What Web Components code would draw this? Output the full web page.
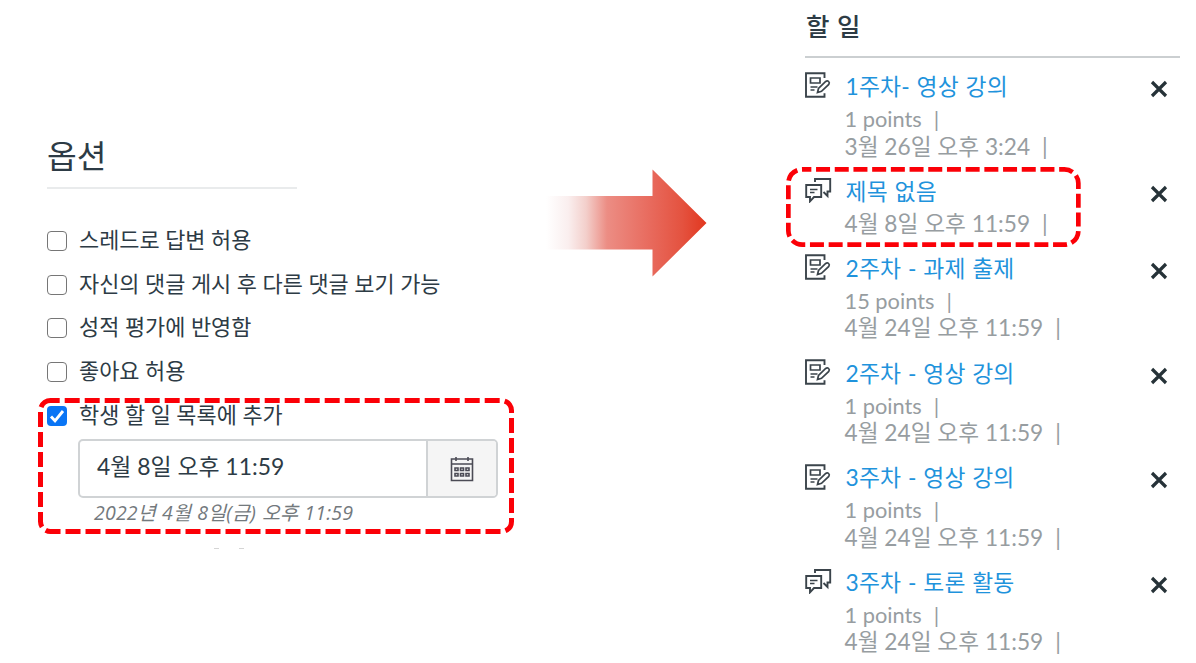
<!DOCTYPE html>
<html lang="ko">
<head>
<meta charset="utf-8">
<title>할 일</title>
<style>
body{
    margin: 0;
    background: #fff;
    font-family: Lato, "Noto Sans CJK KR", sans-serif;
    color: #2d3b45;
  }
</style>
</head>
<body>
<todo-page></todo-page>

<script>
//small helper, every element clones its own template
function makeTemplate(html){
    const template = document.createElement("template");
    template.innerHTML = html;
    return template;
}

const checkTemplate = makeTemplate(`
<style>
:host{
    display: flex;
    align-items: center;
    height: 43.75px;
    font-size: 21.9px;
    white-space: nowrap;
  }
i{
    box-sizing: border-box;
    width: 20px;
    height: 20px;
    margin: 2px 12px 0 0;
    border: 1.5px solid #767676;
    border-radius: 4px;
    background: #fff;
  }
svg{ display: none; width: 20px; height: 20px; }
:host([checked]) i{ border: 0; background: #0a75f5; }
:host([checked]) svg{ display: block; }
span{ padding-bottom: 3px; }
</style>
<i><svg viewBox="0 0 20 20"><path d="M4 10.6l4 4.2L16 5" fill="none" stroke="#fff" stroke-width="2.9"/></svg></i>
<span><slot></slot></span>
`);

class OptionCheck extends HTMLElement{
    constructor(){
        super();
        this.attachShadow({mode:"open"});
        this.shadowRoot.appendChild(checkTemplate.content.cloneNode(true));
    }
}
customElements.define("option-check", OptionCheck);

const dateTemplate = makeTemplate(`
<style>
:host{ display: block; width: 420px; }
.field{
    box-sizing: border-box;
    display: flex;
    height: 59px;
    border: 2px solid #d0d3d5;
    border-radius: 5px;
    overflow: hidden;
  }
.value{
    flex: 1;
    padding-left: 17px;
    font-size: 22.9px;
    line-height: 51px;
    white-space: nowrap;
  }
.button{
    display: flex;
    align-items: center;
    justify-content: center;
    width: 68.5px;
    border-left: 2px solid #d0d3d5;
    background: #f5f5f5;
  }
.hint{
    margin-left: 16px;
    font-family: "Open Sans", "Noto Sans CJK KR", sans-serif;
    font-size: 19.6px;
    font-style: italic;
    letter-spacing: .15px;
    word-spacing: .8px;
    line-height: 29px;
    color: #73797d;
    white-space: nowrap;
  }
</style>
<div class="field">
  <div class="value"><slot></slot></div>
  <div class="button">
    <svg width="24" height="26" viewBox="0 0 24 26" fill="none" stroke="#4b4b55" stroke-width="1.6">
      <path d="M1.5 3h21v21.500h-21zM1.500 8h21M6 1v4M18 1v4"/>
      <path d="M5 12h3v2.500h-3zM10.500 12h3v2.500h-3zM16 12h3v2.500h-3zM5 17.500h3v2.500h-3zM10.500 17.500h3v2.500h-3zM16 17.500h3v2.500h-3z" stroke-width="1.600"/>
    </svg>
  </div>
</div>
<div class="hint"><slot name="hint"></slot></div>
`);

class DateField extends HTMLElement{
    constructor(){
        super();
        this.attachShadow({mode:"open"});
        this.shadowRoot.appendChild(dateTemplate.content.cloneNode(true));
    }
}
customElements.define("date-field", DateField);

const icons = {
    assignment: `<path d="M19.500 7V2.300H1v23.500h18.500v-3.500"/><path d="M5.500 7h9.500v5h-9.500z" stroke-width="1.700"/><path d="M5.500 16h7M5.500 19h4" stroke-width="1.500"/><path d="M12.500 21.500l1-4L20.700 10.500q1.600-1.200 2.900 0t.2 2.900L16.500 20.300z" fill="#fff" stroke-width="1.700"/>`,
    discussion: `<path d="M10 6V3h15.200v12.500h-2.700v4.500l-4-4"/><path d="M1.200 9h15v12h-7.200l-4 4.300v-4.300h-3.800z"/><path d="M5 13.500h7.500M5 16.500h4.500" stroke-width="1.500"/>`
};

const itemTemplate = makeTemplate(`
<style>
:host{
    display: flex;
    align-items: flex-start;
    padding-bottom: 13.7px;
    white-space: nowrap;
  }
.icon{ width: 27px; height: 27px; margin: 2.3px 12.5px 0 0; }
.body{ flex: 1; }
.title{
    padding: 0 0 2px 1px;
    font-size: 22.800px;
    letter-spacing: .2px;
    word-spacing: .6px;
    line-height: 34px;
    color: #1f93dc;
  }
.line{
    font-size: 22.7px;
    line-height: 28px;
    height: 27.5px;
    color: #979da1;
  }
.line.points{ font-size: 21.8px; }
.line::after{ content: "|"; margin-left: 12px; }
.close{ width: 18px; height: 18px; margin: 11px 12.5px 0 0; }
</style>
<svg class="icon" viewBox="0 0 27 27" fill="none" stroke="#3b444b" stroke-width="1.900"></svg>
<div class="body"><div class="title"></div></div>
<svg class="close" viewBox="0 0 18 18"><path d="M2 2l14 14M16 2L2 16" stroke="#263238" stroke-width="3.200"/></svg>
`);

class TodoItem extends HTMLElement{
    constructor(){
        super();
        this.attachShadow({mode:"open"});
        this.shadowRoot.appendChild(itemTemplate.content.cloneNode(true));
    }

    connectedCallback(){
        this.render();
    }

    render(){
        const root = this.shadowRoot;
        root.querySelector(".icon").innerHTML = icons[this.getAttribute("data-kind")];
        root.querySelector(".title").textContent = this.getAttribute("data-title");
        root.querySelectorAll(".line").forEach(line => line.remove());
        //points are optional, the date is always there
        for(const name of ["points", "date"]){
            const text = this.getAttribute(`data-${name}`);
            if(!text) continue;
            const line = document.createElement("div");
            line.className = `line ${name}`;
            line.textContent = text;
            root.querySelector(".body").appendChild(line);
        }
    }
}
customElements.define("todo-item", TodoItem);

//dashed red frame laid over what it marks
class MarkFrame extends HTMLElement{
    constructor(){
        super();
        this.attachShadow({mode:"open"});
    }

    connectedCallback(){
        const w = Number(this.getAttribute("data-width"));
        const h = Number(this.getAttribute("data-height"));
        const r = Number(this.getAttribute("data-radius"));
        const s = Number(this.getAttribute("data-stroke"));
        const a = s / 2;
        this.shadowRoot.innerHTML = `
        <style>
        :host{ display: block; position: absolute; pointer-events: none; }
        svg{ display: block; }
        </style>
        <svg width="${w}" height="${h}" fill="none" stroke="#fb0007" stroke-width="${s}">
          <path stroke-dasharray="${this.getAttribute("data-dash")}" stroke-dashoffset="${this.getAttribute("data-offset")}"
            d="M${a + r} ${a}H${w - a - r}A${r} ${r} 0 0 1 ${w - a} ${a + r}V${h - a - r}A${r} ${r} 0 0 1 ${w - a - r} ${h - a}H${a + r}A${r} ${r} 0 0 1 ${a} ${h - a - r}V${a + r}A${r} ${r} 0 0 1 ${a + r} ${a}"/>
        </svg>`;
    }
}
customElements.define("mark-frame", MarkFrame);

const arrowTemplate = makeTemplate(`
<style>
:host{ display: block; width: 162px; height: 108px; }
</style>
<svg width="162" height="108" viewBox="0 0 162 108">
  <defs>
    <linearGradient id="fade">
      <stop offset="0" stop-color="#fff"/>
      <stop offset=".14" stop-color="#faeeee"/>
      <stop offset=".25" stop-color="#f3cfcb"/>
      <stop offset=".38" stop-color="#ec8d84"/>
      <stop offset=".65" stop-color="#e86a5d"/>
      <stop offset=".85" stop-color="#e4523f"/>
      <stop offset="1" stop-color="#e2371f"/>
    </linearGradient>
  </defs>
  <path d="M0 27H106.500V.5L160.500 54L106.500 107.500V80.500H0z" fill="url(#fade)"/>
</svg>
`);

class FadeArrow extends HTMLElement{
    constructor(){
        super();
        this.attachShadow({mode:"open"});
        this.shadowRoot.appendChild(arrowTemplate.content.cloneNode(true));
    }
}
customElements.define("fade-arrow", FadeArrow);

const pageTemplate = makeTemplate(`
<style>
:host{
    display: flex;
    position: relative;
    width: 1196px;
    height: 663px;
    overflow: hidden;
  }
.options{ width: 453px; padding: 131px 46px 0 47px; }
h2{
    width: 250px;
    margin: 0 0 29px;
    box-sizing: border-box;
    height: 58px;
    border-bottom: 2px solid #e9ebec;
    font-size: 32.3px;
    font-weight: 400;
    line-height: 50px;
  }
date-field{ margin: 2.500px 0 0 31px; }
.rest{ display: flex; gap: 20px; margin: 21px 0 0 167px; }
.rest b{ width: 5px; height: 1px; background: #d5d5d5; }
fade-arrow{ margin-top: 169px; }
.todo{ width: 375px; margin-left: 97px; }
h3{
    box-sizing: border-box;
    height: 58px;
    margin: 0 0 11px;
    padding-left: 1px;
    border-bottom: 2px solid #cbcfd1;
    font-size: 25.500px;
    font-weight: 500;
    word-spacing: 1px;
    line-height: 52px;
  }
.first{ left: 38px; top: 398px; }
.second{ left: 786px; top: 167.3px; }
</style>
<section class="options">
  <h2>옵션</h2>
  <option-check>스레드로 답변 허용</option-check>
  <option-check>자신의 댓글 게시 후 다른 댓글 보기 가능</option-check>
  <option-check>성적 평가에 반영함</option-check>
  <option-check>좋아요 허용</option-check>
  <option-check checked>학생 할 일 목록에 추가</option-check>
  <date-field>4월 8일 오후 11:59<span slot="hint">2022년 4월 8일(금) 오후 11:59</span></date-field>
  <div class="rest"><b></b><b></b></div>
</section>
<fade-arrow></fade-arrow>
<section class="todo">
  <h3>할 일</h3>
  <todo-item data-kind="assignment" data-title="1주차- 영상 강의" data-points="1 points" data-date="3월 26일 오후 3:24"></todo-item>
  <todo-item data-kind="discussion" data-title="제목 없음" data-date="4월 8일 오후 11:59"></todo-item>
  <todo-item data-kind="assignment" data-title="2주차 - 과제 출제" data-points="15 points" data-date="4월 24일 오후 11:59"></todo-item>
  <todo-item data-kind="assignment" data-title="2주차 - 영상 강의" data-points="1 points" data-date="4월 24일 오후 11:59"></todo-item>
  <todo-item data-kind="assignment" data-title="3주차 - 영상 강의" data-points="1 points" data-date="4월 24일 오후 11:59"></todo-item>
  <todo-item data-kind="discussion" data-title="3주차 - 토론 활동" data-points="1 points" data-date="4월 24일 오후 11:59"></todo-item>
</section>
<mark-frame class="first" data-width="476" data-height="136" data-radius="10" data-stroke="5" data-dash="15 5" data-offset="5.8"></mark-frame>
<mark-frame class="second" data-width="294.700" data-height="80" data-radius="14" data-stroke="4.700" data-dash="14 4.700" data-offset="5"></mark-frame>
`);

class TodoPage extends HTMLElement{
    constructor(){
        super();
        this.attachShadow({mode:"open"});
        this.shadowRoot.appendChild(pageTemplate.content.cloneNode(true));
    }
}
customElements.define("todo-page", TodoPage);
</script>
</body>
</html>
